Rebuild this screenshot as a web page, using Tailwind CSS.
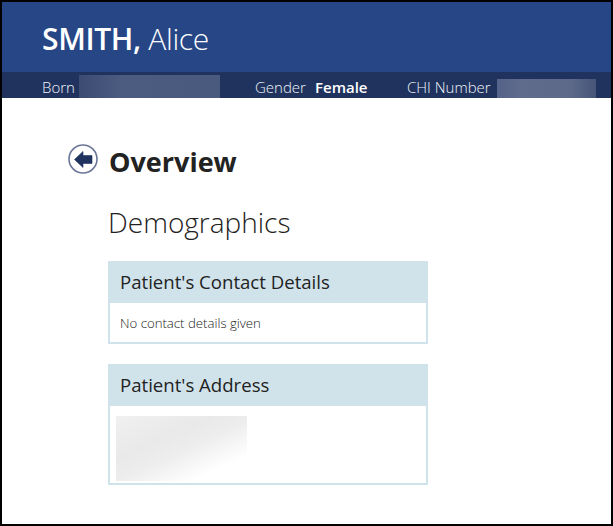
<!DOCTYPE html>
<html lang="en">
<head>
    <meta charset="UTF-8">
    <title>Overview</title>
    <script src="https://cdn.jsdelivr.net/npm/@tailwindcss/browser@4"></script>
</head>
<body class="bg-white font-['Open_Sans',sans-serif] text-[#222222]">
    <div class="h-[526px] w-[613px] border-2 border-black overflow-hidden">
        <!-- patient banner -->
        <div class="h-[70px] bg-[#264686] pl-[40px] pt-[17px] text-[30px] leading-[40px] text-white tracking-[-0.35px]">
            <span class="font-semibold">SMITH,</span> <span class="font-light">Alice</span>
        </div>
        <div class="flex h-[26px] bg-[#20335f] text-[15px] leading-[30px] text-[#f0f4fa] font-light">
            <span class="ml-[40px] w-[37px]">Born</span>
            <div class="mt-[3px] h-[23px] w-[141px] bg-[linear-gradient(90deg,#3b4b72,#4c5b80_30%,#4a597e_85%,#4a5a7e)]"></div>
            <span class="ml-[35px] w-[60px]">Gender</span>
            <span class="w-[92px] font-semibold text-white">Female</span>
            <span class="w-[90px]">CHI Number</span>
            <div class="mt-[7px] h-[19px] w-[99px] bg-[linear-gradient(90deg,#55628a,#5f6c8c_25%,#5c6989_75%,#465478)]"></div>
        </div>

        <div class="pl-[106px] pt-[46px]">
            <div class="relative">
                <!-- back button -->
                <svg class="absolute left-[-40px] top-[0px]" width="30" height="30" viewBox="0 0 30 30">
                    <circle cx="15" cy="15" r="14" fill="white" stroke="#6a7697" stroke-width="1.6"/>
                    <path d="M6.5 15.5 L15 7.5 V11.5 H24 V19.5 H15 V23.5 Z" fill="#20335f" stroke="#20335f" stroke-width="0.6" stroke-linejoin="round"/>
                </svg>
                <h1 class="pl-[1px] text-[27px] leading-[36px] font-bold">Overview</h1>
            </div>
            <h2 class="mt-[24px] text-[28px] leading-[36px] font-light">Demographics</h2>

            <div class="mt-[21px] w-[320px] border-2 border-[#d1e3ea]">
                <div class="h-[40px] bg-[#d1e3ea] pl-[10px] text-[18.6px] leading-[38px]">Patient's Contact Details</div>
                <div class="h-[39px] pl-[10px] text-[13.2px] leading-[40px] font-light">No contact details given</div>
            </div>

            <div class="mt-[20px] w-[320px] border-2 border-[#d1e3ea]">
                <div class="h-[40px] bg-[#d1e3ea] pl-[10px] text-[18.6px] leading-[38px]">Patient's Address</div>
                <div class="h-[77px] pl-[6px] pt-[10px]">
                    <div class="h-[65px] w-[131px] bg-[linear-gradient(155deg,#f0f0f0,#e9e9e9_35%,#ededed_52%,#ffffff_80%)]"></div>
                </div>
            </div>
        </div>
    </div>
</body>
</html>
